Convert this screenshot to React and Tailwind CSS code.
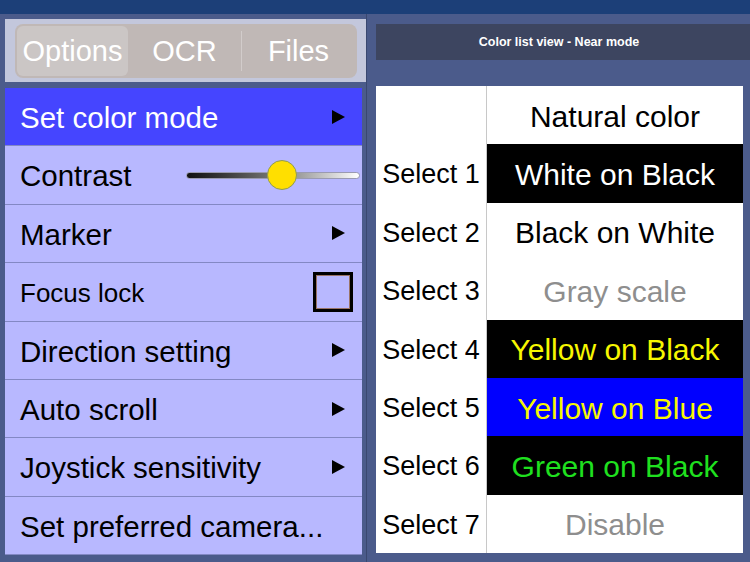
import React from 'react';

const MENU = [
  { label: 'Set color mode', kind: 'arrow', active: true },
  { label: 'Contrast', kind: 'slider' },
  { label: 'Marker', kind: 'arrow' },
  { label: 'Focus lock', kind: 'check', small: true },
  { label: 'Direction setting', kind: 'arrow' },
  { label: 'Auto scroll', kind: 'arrow' },
  { label: 'Joystick sensitivity', kind: 'arrow' },
  { label: 'Set preferred camera...', kind: 'none' },
];

const COLORS = [
  { sel: '', label: 'Natural color', cls: 'bg-white text-black' },
  { sel: 'Select 1', label: 'White on Black', cls: 'bg-black text-white' },
  { sel: 'Select 2', label: 'Black on White', cls: 'bg-white text-black' },
  { sel: 'Select 3', label: 'Gray scale', cls: 'bg-white text-[#8e8e8e]' },
  { sel: 'Select 4', label: 'Yellow on Black', cls: 'bg-black text-[#f7f700]' },
  { sel: 'Select 5', label: 'Yellow on Blue', cls: 'bg-[#0000ff] text-[#f7f700]' },
  { sel: 'Select 6', label: 'Green on Black', cls: 'bg-black text-[#1fe01f]' },
  { sel: 'Select 7', label: 'Disable', cls: 'bg-white text-[#8e8e8e]' },
];

function Arrow() {
  return (
    <svg width="14" height="14" viewBox="0 0 14 14">
      <path d="M1 0 L14 7 L1 14 Z" fill="#000" />
    </svg>
  );
}

function Slider() {
  return (
    <div className="relative w-[174px] h-[30px] flex items-center mr-[-15px]">
      <div className="w-full h-[7px] rounded-full bg-gradient-to-r from-[#111] via-[#777] to-white border border-[#9a9ab0]" />
      <div className="absolute left-[81px] top-0 w-[30px] h-[30px] rounded-full bg-[#ffdf00] border border-[#8f9a55]" />
    </div>
  );
}

function Check() {
  return (
    <div className="w-[40px] h-[40px] border-[3px] border-black mr-[-8px]">
      <div className="w-full h-full border border-[#9a7466]" />
    </div>
  );
}

export default function App() {
  return (
    <div className="w-[750px] h-[562px] overflow-hidden bg-[#4b5b8b] flex flex-col font-['Liberation_Sans',Arial,sans-serif]">
      {/* top bar */}
      <div className="h-[14px] bg-[#1c3f78] shrink-0" />

      <div className="flex flex-1 min-h-0">
        {/* left panel */}
        <div className="w-[367px] shrink-0 border-r border-[#3a4870] pl-[5px] flex flex-col">
          <div className="mt-[5px] h-[63px] bg-[#c3c7dc] pl-[10px] pt-[5px]">
            <div className="w-[342px] h-[54px] rounded-[8px] bg-[#c0b8b6] flex items-center text-white text-[29px] p-[2px]">
              <div className="w-[111px] h-full rounded-[6px] bg-[#cbc6c5] flex items-center justify-center pt-[2px]">
                Options
              </div>
              <div className="flex-1 h-full flex items-center justify-center pt-[2px]">OCR</div>
              <div className="w-px h-[40px] bg-[#d2cccb]" />
              <div className="w-[113px] h-full flex items-center justify-center pt-[2px]">Files</div>
            </div>
          </div>

          <div className="mt-[6px] w-[357px] flex flex-col">
            {MENU.map((m) => (
              <div
                key={m.label}
                className={
                  'h-[58.4px] box-border border-b border-[#8388c4] flex items-center justify-between pl-[15px] pr-[17px] ' +
                  (m.active ? 'bg-[#4545ff] text-white' : 'bg-[#b8b8ff] text-black')
                }
              >
                <span className={'pt-[3px] ' + (m.small ? 'text-[26px]' : 'text-[29.5px]')}>{m.label}</span>
                {m.kind === 'arrow' && <Arrow />}
                {m.kind === 'slider' && <Slider />}
                {m.kind === 'check' && <Check />}
              </div>
            ))}
          </div>
        </div>

        {/* right panel */}
        <div className="flex-1 pl-[9px] flex flex-col">
          <div className="mt-[10px] h-[36px] bg-[#3d4560] flex items-center justify-center pr-[8px]">
            <span className="text-white text-[12.5px] font-bold">Color list view - Near mode</span>
          </div>

          <div className="mt-[26px] w-[367px] bg-white flex flex-col">
            {COLORS.map((c) => (
              <div key={c.label} className="h-[58.4px] flex">
                <div className="w-[111px] flex items-center justify-center text-[27px] text-black border-r border-[#c8c8c8] pt-[2px]">
                  {c.sel}
                </div>
                <div className={'flex-1 flex items-center justify-center text-[30px] pt-[2px] ' + c.cls}>
                  {c.label}
                </div>
              </div>
            ))}
          </div>
        </div>
      </div>
    </div>
  );
}
